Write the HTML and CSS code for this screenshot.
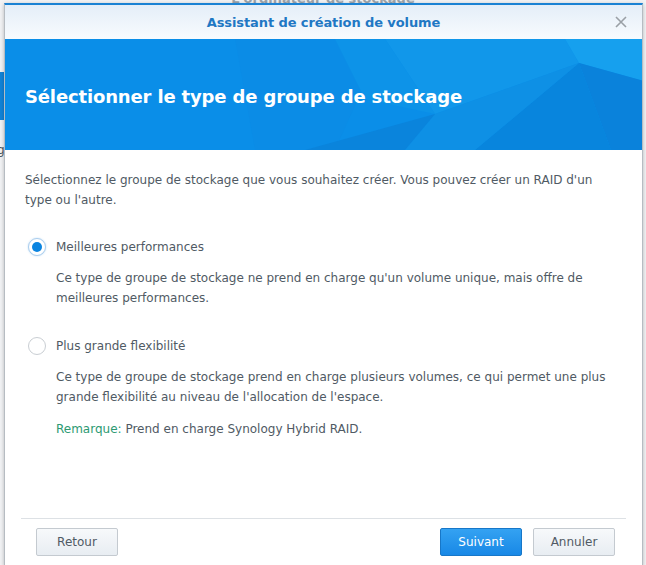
FILE: index.html
```html
<!DOCTYPE html>
<html lang="fr">
<head>
    <meta charset="UTF-8">
    <title>Assistant de création de volume</title>
    <link rel="stylesheet" href="styles.css">
</head>
<body>
    <div class="backdrop">
        <div class="behind-title">L'ordinateur de stockage</div>
        <div class="behind-strip"></div>
        <div class="behind-letter">g</div>
    </div>

    <div class="dialog">
        <div class="titlebar">
            <span class="title">Assistant de création de volume</span>
            <span class="close">
                <svg width="14" height="14" viewBox="0 0 14 14">
                    <path d="M2 2 L12 12 M12 2 L2 12" stroke="#9aa0a6" stroke-width="1.6" fill="none"/>
                </svg>
            </span>
        </div>

        <div class="banner">
            <svg class="facets" width="639" height="111" viewBox="0 0 639 111" preserveAspectRatio="none">
                <polygon points="230,0 380,0 330,111 250,111" fill="#0b8ce6"/>
                <polygon points="380,0 560,0 574,24 430,75" fill="#1197ea"/>
                <polygon points="560,0 639,0 639,42 574,24" fill="#16a0ee"/>
                <polygon points="574,24 639,42 639,111 606,111" fill="#0a82db"/>
                <polygon points="574,24 606,111 470,111" fill="#0885dd"/>
                <polygon points="430,75 574,24 470,111 400,111" fill="#0e90e5"/>
                <polygon points="300,111 430,75 400,111" fill="#0a84dc"/>
                <polygon points="330,0 380,0 430,75 360,60" fill="#0d93e8"/>
            </svg>
            <h1 class="banner-title">Sélectionner le type de groupe de stockage</h1>
        </div>

        <div class="content">
            <p class="intro">Sélectionnez le groupe de stockage que vous souhaitez créer. Vous pouvez créer un RAID d'un type ou l'autre.</p>

            <div class="option">
                <label class="radio-row">
                    <span class="radio checked"></span>
                    <span>Meilleures performances</span>
                </label>
                <p class="desc">Ce type de groupe de stockage ne prend en charge qu'un volume unique, mais offre de meilleures performances.</p>
            </div>

            <div class="option">
                <label class="radio-row">
                    <span class="radio"></span>
                    <span>Plus grande flexibilité</span>
                </label>
                <p class="desc">Ce type de groupe de stockage prend en charge plusieurs volumes, ce qui permet une plus grande flexibilité au niveau de l'allocation de l'espace.</p>
                <p class="desc note"><span class="note-label">Remarque:</span> Prend en charge Synology Hybrid RAID.</p>
            </div>
        </div>

        <div class="footer">
            <button class="btn">Retour</button>
            <div class="footer-right">
                <button class="btn primary">Suivant</button>
                <button class="btn">Annuler</button>
            </div>
        </div>
    </div>
</body>
</html>
```

FILE: styles.css
```css
html, body {
    margin: 0;
    padding: 0;
    height: 100%;
}
body {
    font-family: "DejaVu Sans", Verdana, sans-serif;
    font-size: 12px;
    color: #505a64;
    background-color: #f2f3f5;
    position: relative;
    overflow: hidden;
}

/* bits of the window behind the dialog */
.backdrop {
    position: absolute;
    inset: 0;
}
.behind-title {
    position: absolute;
    top: -9px;
    left: 0;
    right: 0;
    text-align: center;
    font-size: 13px;
    font-weight: bold;
    color: #9ba3ab;
}
.behind-strip {
    position: absolute;
    left: 0;
    top: 72px;
    width: 6px;
    height: 48px;
    background-color: #1183d8;
}
.behind-letter {
    position: absolute;
    left: -3px;
    top: 143px;
    font-size: 12px;
    color: #505a64;
}

.dialog {
    position: absolute;
    left: 4px;
    top: 3px;
    width: 637px;
    height: 560px;
    background-color: #ffffff;
    border: 1px solid #b6bcc2;
    border-top: 2px solid #1a82d3;
    box-shadow: 0 1px 4px rgba(0, 0, 0, 0.25);
    display: flex;
    flex-direction: column;
}

.titlebar {
    height: 34px;
    display: flex;
    align-items: center;
    justify-content: center;
    position: relative;
    background: linear-gradient(to bottom, #e4eef8, #f8fbfe);
}
.title {
    font-weight: bold;
    font-size: 13px;
    color: #1f78c4;
    letter-spacing: -0.1px;
}
.close {
    position: absolute;
    right: 14px;
    top: 10px;
    width: 14px;
    height: 14px;
}

.banner {
    position: relative;
    height: 111px;
    background-color: #0a8ee8;
    overflow: hidden;
    display: flex;
    align-items: center;
}
.facets {
    position: absolute;
    left: 0;
    top: 0;
}
.banner-title {
    position: relative;
    margin: 3px 0 0 20px;
    font-size: 18px;
    font-weight: bold;
    color: #ffffff;
    letter-spacing: -0.15px;
}

.content {
    flex: 1;
    padding: 20px 20px 0 20px;
    line-height: 20px;
}
.content p {
    margin: 0;
}
.intro {
    width: 590px;
    margin-bottom: 27px !important;
}
.option {
    margin-bottom: 28px;
}
.radio-row {
    display: flex;
    align-items: center;
    gap: 10px;
    height: 20px;
    margin-bottom: 11px;
}
.radio {
    width: 18px;
    height: 18px;
    margin-left: 3px;
    border-radius: 50%;
    border: 1px solid #c9ced3;
    background-color: #ffffff;
    box-sizing: border-box;
    position: relative;
}
.radio.checked {
    border-color: #a9cdee;
    box-shadow: 0 0 2px #bcdaf3;
}
.radio.checked::after {
    content: "";
    position: absolute;
    left: 3px;
    top: 3px;
    width: 10px;
    height: 10px;
    border-radius: 50%;
    background-color: #0a84e0;
}
.desc {
    padding-left: 31px;
    width: 560px;
}
.note {
    margin-top: 12px !important;
}
.note-label {
    color: #2d9a72;
}

.footer {
    margin: 0 16px;
    border-top: 1px solid #dde1e5;
    padding: 9px 11px 0 15px;
    height: 37px;
    display: flex;
    justify-content: space-between;
    align-items: flex-start;
}
.footer-right {
    display: flex;
    gap: 11px;
}
.btn {
    font-family: "DejaVu Sans", Verdana, sans-serif;
    font-size: 12px;
    color: #505a64;
    width: 82px;
    height: 28px;
    border: 1px solid #c4cad0;
    border-radius: 2px;
    background: linear-gradient(to bottom, #f7f9fb, #e8edf2);
    cursor: pointer;
}
.btn.primary {
    color: #ffffff;
    border-color: #1777c8;
    background: linear-gradient(to bottom, #34a2f2, #1888e6);
}
```
